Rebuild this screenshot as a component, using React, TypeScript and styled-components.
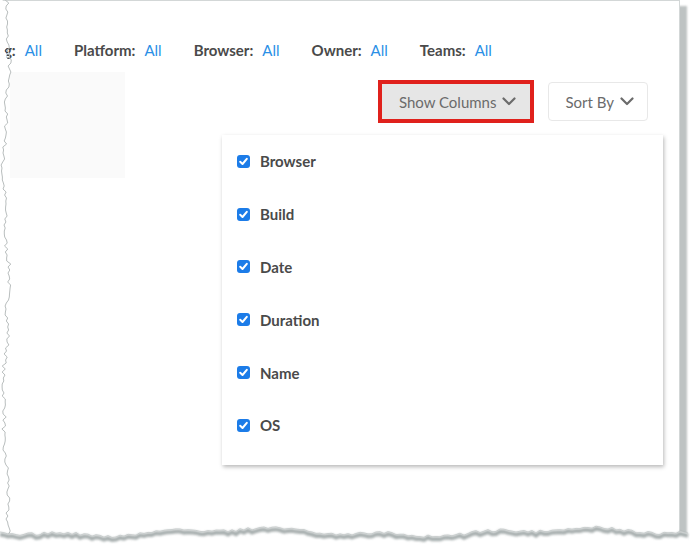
import React from "react";
import styled, { createGlobalStyle } from "styled-components";

const GlobalStyle = createGlobalStyle`
  html, body { margin: 0; padding: 0; background: #fff; }
  body { font-family: Lato, "Open Sans", "Liberation Sans", sans-serif; }
`;

const Frame = styled.div`
  position: relative;
  width: 690px;
  height: 552px;
  overflow: hidden;
  background: #fff;
`;

const Sheet = styled.div`
  width: 680px;
  height: 545px;
  box-sizing: border-box;
  border-top: 1px solid #d3d7d7;
  border-right: 1px solid #d3d7d7;
  background: #fff;
  box-shadow: 7px 6px 2px rgba(110, 122, 122, 0.45);
  display: flex;
  flex-direction: column;
`;

const FilterBar = styled.div`
  display: flex;
  align-items: center;
  gap: 32px;
  height: 20px;
  margin-top: 39px;
  margin-left: -11px;
`;

const Filter = styled.div`
  display: flex;
  align-items: center;
  gap: 9px;
  font-size: 15px;
  line-height: 20px;
`;

const Label = styled.span`
  font-weight: 700;
  color: #4a4a4a;
`;

const Value = styled.span`
  color: #2a8fe6;
`;

const Main = styled.div`
  display: flex;
  margin-top: 12px;
`;

const Ghost = styled.div`
  width: 115px;
  height: 106px;
  margin-left: 10px;
  background: #fafafa;
  flex: none;
`;

const Right = styled.div`
  flex: 1;
  display: flex;
  flex-direction: column;
  align-items: flex-end;
  padding-top: 8px;
  padding-right: 16px;
`;

const Toolbar = styled.div`
  display: flex;
  align-items: center;
  gap: 14px;
  margin-right: 15px;
`;

const Highlight = styled.div`
  border: 4px solid #e0211c;
  display: flex;
`;

const Button = styled.button<{ $active?: boolean }>`
  display: flex;
  align-items: center;
  gap: 6px;
  box-sizing: border-box;
  height: ${(p) => (p.$active ? "35px" : "39px")};
  padding: ${(p) => (p.$active ? "0 14px 0 17px" : "0 13px 0 16px")};
  background: ${(p) => (p.$active ? "#e6e6e6" : "#fff")};
  border: ${(p) => (p.$active ? "none" : "1px solid #e8e8e8")};
  border-radius: ${(p) => (p.$active ? "0" : "4px")};
  color: #6b6b6b;
  font-family: Lato, "Open Sans", sans-serif;
  font-size: 15px;
  cursor: pointer;
`;

const Menu = styled.div`
  margin-top: 12px;
  width: 441px;
  box-sizing: border-box;
  padding: 0 0 13px 15px;
  background: #fff;
  box-shadow: 1px 2px 4px rgba(0, 0, 0, 0.28);
`;

const Row = styled.label`
  display: flex;
  align-items: center;
  gap: 10px;
  height: 52.8px;
  font-size: 15px;
  font-weight: 700;
  color: #4a4a4a;
`;

const Box = styled.span`
  width: 13px;
  height: 13px;
  border-radius: 3px;
  background: #1c7ce8;
  display: flex;
  align-items: center;
  justify-content: center;
`;

const Overlay = styled.svg`
  position: absolute;
  left: 0;
  pointer-events: none;
`;

const Chevron = () => (
  <svg width="14" height="9" viewBox="0 0 14 9">
    <path d="M1.5 1.5 L7 7 L12.5 1.5" stroke="currentColor" strokeWidth="2.2" fill="none" strokeLinecap="round" strokeLinejoin="round" />
  </svg>
);

const Check = () => (
  <Box>
    <svg width="11" height="11" viewBox="0 0 11 11">
      <path d="M2.2 5.8 L4.5 8 L8.8 2.8" stroke="#fff" strokeWidth="2" fill="none" strokeLinecap="round" strokeLinejoin="round" />
    </svg>
  </Box>
);

function rng(seed: number) {
  let s = seed;
  return () => {
    s = (s * 16807) % 2147483647;
    return (s - 1) / 2147483646;
  };
}

function leftEdge() {
  const r = rng(7);
  const pts: [number, number][] = [];
  for (let y = 0; y <= 540; y += 3) {
    const x = 6 + 2.5 * Math.sin(y / 37) + 1.2 * Math.sin(y / 11 + 2) + (r() - 0.5) * 4;
    pts.push([x, y]);
  }
  return pts;
}

function bottomEdge() {
  const r = rng(31);
  const pts: [number, number][] = [];
  for (let x = 0; x <= 690; x += 4) {
    const y = 32 + 3 * Math.sin(x / 53) + 1.8 * Math.sin(x / 17 + 1) + (r() - 0.5) * 3;
    pts.push([x, y]);
  }
  return pts;
}

const filters = [
  ["Tag:", "All"],
  ["Platform:", "All"],
  ["Browser:", "All"],
  ["Owner:", "All"],
  ["Teams:", "All"],
];

const columns = ["Browser", "Build", "Date", "Duration", "Name", "OS"];

export default function App() {
  const left = leftEdge();
  const leftLine = left.map(([x, y]) => `${x.toFixed(1)},${y}`).join(" ");
  const leftFill = left.map(([x, y]) => `${Math.max(0, x - 3).toFixed(1)},${y}`).join(" L");
  const bottom = bottomEdge();
  const bLine = bottom.map(([x, y]) => `${x},${y.toFixed(1)}`).join(" L");
  const bShadow = bottom.map(([x, y]) => `${x},${(y + 2.5).toFixed(1)}`).join(" L");
  return (
    <>
      <GlobalStyle />
      <Frame>
        <Sheet>
          <FilterBar>
            {filters.map(([l, v]) => (
              <Filter key={l}>
                <Label>{l}</Label>
                <Value>{v}</Value>
              </Filter>
            ))}
          </FilterBar>
          <Main>
            <Ghost />
            <Right>
              <Toolbar>
                <Highlight>
                  <Button $active>
                    Show Columns <Chevron />
                  </Button>
                </Highlight>
                <Button>
                  Sort By <Chevron />
                </Button>
              </Toolbar>
              <Menu>
                {columns.map((c) => (
                  <Row key={c}>
                    <Check />
                    {c}
                  </Row>
                ))}
              </Menu>
            </Right>
          </Main>
        </Sheet>
        <Overlay style={{ top: 0 }} width="20" height="540" viewBox="0 0 20 540">
          <path d={`M0,0 L${leftFill} L0,540 Z`} fill="#fff" />
          <polyline points={leftLine} fill="none" stroke="#b9bebe" strokeWidth="1" />
        </Overlay>
        <Overlay style={{ top: 500 }} width="690" height="52" viewBox="0 0 690 52">
          <defs>
            <filter id="blur" x="-5%" y="-50%" width="110%" height="200%">
              <feGaussianBlur stdDeviation="1.3" />
            </filter>
          </defs>
          <path d={`M${bLine} L690,52 L0,52 Z`} fill="#fff" />
          <path d={`M${bShadow}`} fill="none" stroke="rgba(110,122,122,0.6)" strokeWidth="4" filter="url(#blur)" />
          <path d={`M${bLine}`} fill="none" stroke="#c4c9c9" strokeWidth="0.8" />
        </Overlay>
      </Frame>
    </>
  );
}
